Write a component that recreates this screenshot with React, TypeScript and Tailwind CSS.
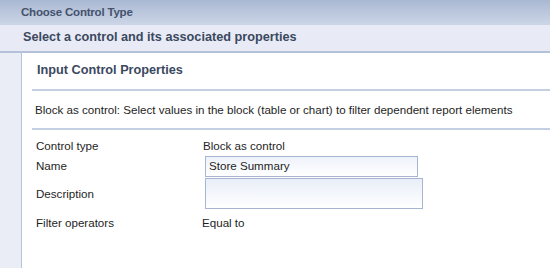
export default function App() {
  const font = { fontFamily: '"Liberation Sans", Arial, sans-serif' };
  return (
    <div className="w-[550px] h-[268px] overflow-hidden bg-[#eaedf6] flex flex-col text-[#1e1e1e]" style={font}>
      {/* title bar */}
      <div className="h-[25px] shrink-0 flex items-center pl-[21px] bg-gradient-to-b from-[#a9b8d2] to-[#cdd6e8]">
        <span className="text-[11.5px] font-bold tracking-[-0.2px] text-[#44526c]">Choose Control Type</span>
      </div>
      {/* sub header */}
      <div className="h-[28px] shrink-0 flex items-center pl-[23px] bg-[#e8ebf5] border-b-2 border-[#b3c1d9]">
        <span className="text-[12.7px] font-bold text-[#3a4860]">Select a control and its associated properties</span>
      </div>
      <div className="flex-1 flex">
        <div className="w-[21px] shrink-0 bg-[#eaedf6]" />
        <div className="flex-1 bg-white border-l border-[#b7c3da] pl-[10px]">
          <div className="h-[36px] flex items-center pl-[5px]">
            <span className="text-[12.7px] font-bold text-[#3a4860]">Input Control Properties</span>
          </div>
          <div className="h-[2px] bg-[#c4cfe2]" />
          <div className="h-[37px] flex items-center pl-[3px] text-[11.6px]">
            Block as control: Select values in the block (table or chart) to filter dependent report elements
          </div>
          <div className="h-[2px] bg-[#c4cfe2]" />
          <div className="pl-[4px] pt-[7px] text-[11.6px]">
            <div className="flex items-center h-[18px]">
              <span className="w-[167px]">Control type</span>
              <span>Block as control</span>
            </div>
            <div className="flex items-center h-[22px]">
              <span className="w-[169px]">Name</span>
              <div className="w-[213px] h-[21px] border border-[#a7b5d0] bg-gradient-to-b from-[#eef2fa] to-white flex items-center pl-[3px]">
                Store Summary
              </div>
            </div>
            <div className="flex items-center h-[33px]">
              <span className="w-[169px]">Description</span>
              <div className="w-[218px] h-[31px] border border-[#a7b5d0] bg-gradient-to-b from-[#e8eef8] to-white" />
            </div>
            <div className="flex items-center h-[26px]">
              <span className="w-[166px]">Filter operators</span>
              <span>Equal to</span>
            </div>
          </div>
        </div>
      </div>
    </div>
  );
}
